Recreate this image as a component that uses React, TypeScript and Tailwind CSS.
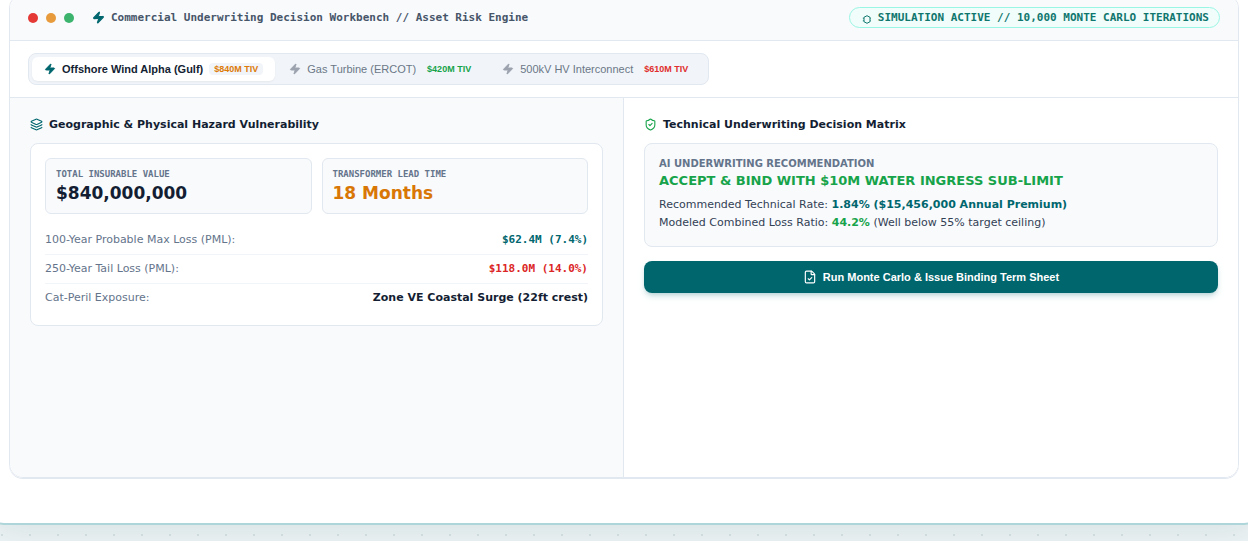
import { useState } from 'react';
import { FileCheck, Layers, ShieldCheck, Zap } from 'lucide-react';
import { clsx } from 'clsx';

const assets = [
  { id: 'wind', name: 'Offshore Wind Alpha (Gulf)', tiv: '$840M TIV', tone: 'text-[#dd7a08]' },
  { id: 'gas', name: 'Gas Turbine (ERCOT)', tiv: '$420M TIV', tone: 'text-[#16a34a]' },
  { id: 'hv', name: '500kV HV Interconnect', tiv: '$610M TIV', tone: 'text-[#e02d2d]' },
];

const metrics = [
  { label: 'TOTAL INSURABLE VALUE', value: '$840,000,000', tone: 'text-[#141e33]' },
  { label: 'TRANSFORMER LEAD TIME', value: '18 Months', tone: 'text-[#d97706]' },
];

const MONO = "font-['DejaVu_Sans_Mono',monospace]";

const losses = [
  { label: '100-Year Probable Max Loss (PML):', value: '$62.4M (7.4%)', tone: "font-['DejaVu_Sans_Mono',monospace] text-[#00666e]" },
  { label: '250-Year Tail Loss (PML):', value: '$118.0M (14.0%)', tone: "font-['DejaVu_Sans_Mono',monospace] text-[#dc2626]" },
  { label: 'Cat-Peril Exposure:', value: 'Zone VE Coastal Surge (22ft crest)', tone: 'text-[#141e33]' },
];

function SimulationIcon() {
  return (
    <svg width="10" height="9" viewBox="0 0 10 9" fill="none" stroke="currentColor" className="mt-1" aria-hidden="true">
      <path d="M5 .7 8 2.3v4.4L5 8.3 2 6.7V2.3Z" strokeWidth="1" strokeLinejoin="round" />
      <path d="M.8 3.2H2M.8 5.8H2M8 3.2h.8M8 5.8h.8" strokeWidth="0.8" />
    </svg>
  );
}

function HeaderBar() {
  return (
    <header className="flex items-center justify-between border-b border-[#e2e8f0] bg-[#f8fafc] px-[18px] py-3">
      <div className="flex items-center">
        <div className="flex gap-2">
          <span className="size-2.5 rounded-full bg-[#e53935]" />
          <span className="size-2.5 rounded-full bg-[#e89b3c]" />
          <span className="size-2.5 rounded-full bg-[#3cb46e]" />
        </div>
        <h1 className={clsx(MONO, 'ml-[18px] flex items-center gap-1.5 text-[11px] leading-[13px] font-bold text-[#475569]')}>
          <Zap size={13} className="fill-current text-[#00666e]" />
          Commercial Underwriting Decision Workbench // Asset Risk Engine
        </h1>
      </div>
      <div
        className={clsx(
          MONO,
          'flex items-center gap-1.5 rounded-full border border-[#99f6e4] bg-[#f0fdfa] py-[3px] pr-2.5 pl-3 text-[11px] leading-[13px] font-bold text-[#0f766e]'
        )}
      >
        <SimulationIcon />
        SIMULATION ACTIVE // 10,000 MONTE CARLO ITERATIONS
      </div>
    </header>
  );
}

function AssetTabs() {
  const [active, setActive] = useState('wind');

  return (
    <div className="flex border-b border-[#e2e8f0] bg-white px-[18px] py-3">
      <div role="tablist" className="flex gap-0.5 rounded-lg border border-[#e2e8f0] bg-[#f1f5f9] p-[3px]">
        {assets.map((asset) => (
          <button
            key={asset.id}
            role="tab"
            aria-selected={active === asset.id}
            onClick={() => setActive(asset.id)}
            className={clsx(
              "flex h-6 cursor-pointer items-center gap-1.5 rounded-md px-3 font-['Liberation_Sans',Arial,sans-serif] text-[11px]",
              active === asset.id ? 'bg-white font-bold text-[#141e33] shadow-xs' : 'text-[#6b7787]'
            )}
          >
            <Zap size={12} className={clsx('fill-current', active === asset.id ? 'text-[#00666e]' : 'text-[#9ca3af]')} />
            {asset.name}
            <span className={clsx('rounded bg-[#f1f5f9] px-[5px] text-[9px] leading-3 font-bold', asset.tone)}>
              {asset.tiv}
            </span>
          </button>
        ))}
      </div>
    </div>
  );
}

function HazardPanel() {
  return (
    <section className="border-r border-[#e2e8f0] bg-[#f8fafc] p-5">
      <h2 className="mb-3 flex items-center gap-1.5 text-[11px] leading-[13px] font-bold text-[#141e33]">
        <Layers size={13} className="text-[#00666e]" />
        Geographic &amp; Physical Hazard Vulnerability
      </h2>
      <div className="rounded-lg border border-[#e2e8f0] bg-white p-3.5">
        <div className="grid grid-cols-2 gap-2.5">
          {metrics.map((metric) => (
            <div key={metric.label} className="rounded-md border border-[#e2e8f0] bg-[#f8fafc] px-2.5 pt-2.5 pb-[9px]">
              <div className={clsx(MONO, 'text-[9px] leading-[11px] font-bold text-[#64748b]')}>{metric.label}</div>
              <div className={clsx('mt-[3px] text-[17px] leading-[21px] font-bold', metric.tone)}>{metric.value}</div>
            </div>
          ))}
        </div>
        <dl className="mt-3 text-[11px] leading-[13px]">
          {losses.map((row) => (
            <div
              key={row.label}
              className="flex items-center justify-between border-b border-[#f1f5f9] pt-[7px] pb-2 last:border-b-0 last:pb-[7px]"
            >
              <dt className="text-[#64748b]">{row.label}</dt>
              <dd className={clsx('font-bold', row.tone)}>{row.value}</dd>
            </div>
          ))}
        </dl>
      </div>
    </section>
  );
}

function DecisionPanel() {
  return (
    <section className="bg-white p-5">
      <h2 className="mb-3 flex items-center gap-1.5 text-[11px] leading-[13px] font-bold text-[#141e33]">
        <ShieldCheck size={13} className="text-[#16a34a]" />
        Technical Underwriting Decision Matrix
      </h2>
      <div className="rounded-lg border border-[#e2e8f0] bg-[#f8fafc] p-3.5">
        <div className="text-[10px] leading-3 font-bold text-[#64748b]">AI UNDERWRITING RECOMMENDATION</div>
        <div className="mt-[3px] text-[13px] leading-4 font-bold text-[#16a34a]">
          ACCEPT &amp; BIND WITH $10M WATER INGRESS SUB-LIMIT
        </div>
        <div className="mt-[7px] text-[11px] leading-[18px] text-[#334155]">
          <p>
            Recommended Technical Rate: <strong className="text-[#00666e]">1.84% ($15,456,000 Annual Premium)</strong>
          </p>
          <p>
            Modeled Combined Loss Ratio: <strong className="text-[#16a34a]">44.2%</strong> (Well below 55% target ceiling)
          </p>
        </div>
      </div>
      <button className="mt-3.5 flex h-8 w-full cursor-pointer items-center justify-center gap-1.5 rounded-lg bg-[#00666e] font-['Liberation_Sans',Arial,sans-serif] text-[11px] font-bold text-white shadow-md shadow-[#00666e]/20">
        <FileCheck size={14} />
        Run Monte Carlo &amp; Issue Binding Term Sheet
      </button>
    </section>
  );
}

export default function App() {
  return (
    <main className="min-h-screen overflow-hidden bg-[#f1f6f7] bg-[radial-gradient(circle,#d9e4e6_1px,transparent_1px)] bg-[size:28px_28px] bg-[position:-12px_17px] font-['DejaVu_Sans',sans-serif]">
      <div className="-mx-3 rounded-b-2xl border-x border-b-2 border-[#aed6da] bg-white px-5 pb-[45px] shadow-[0_12px_36px_rgba(0,70,80,0.1)]">
        <div className="-mt-1.5 overflow-hidden rounded-[14px] border border-[#e2e8f0] shadow-[0_1px_0_#e2e8f0]">
          <HeaderBar />
          <AssetTabs />
          <div className="grid min-h-[379px] grid-cols-2">
            <HazardPanel />
            <DecisionPanel />
          </div>
        </div>
      </div>
    </main>
  );
}
